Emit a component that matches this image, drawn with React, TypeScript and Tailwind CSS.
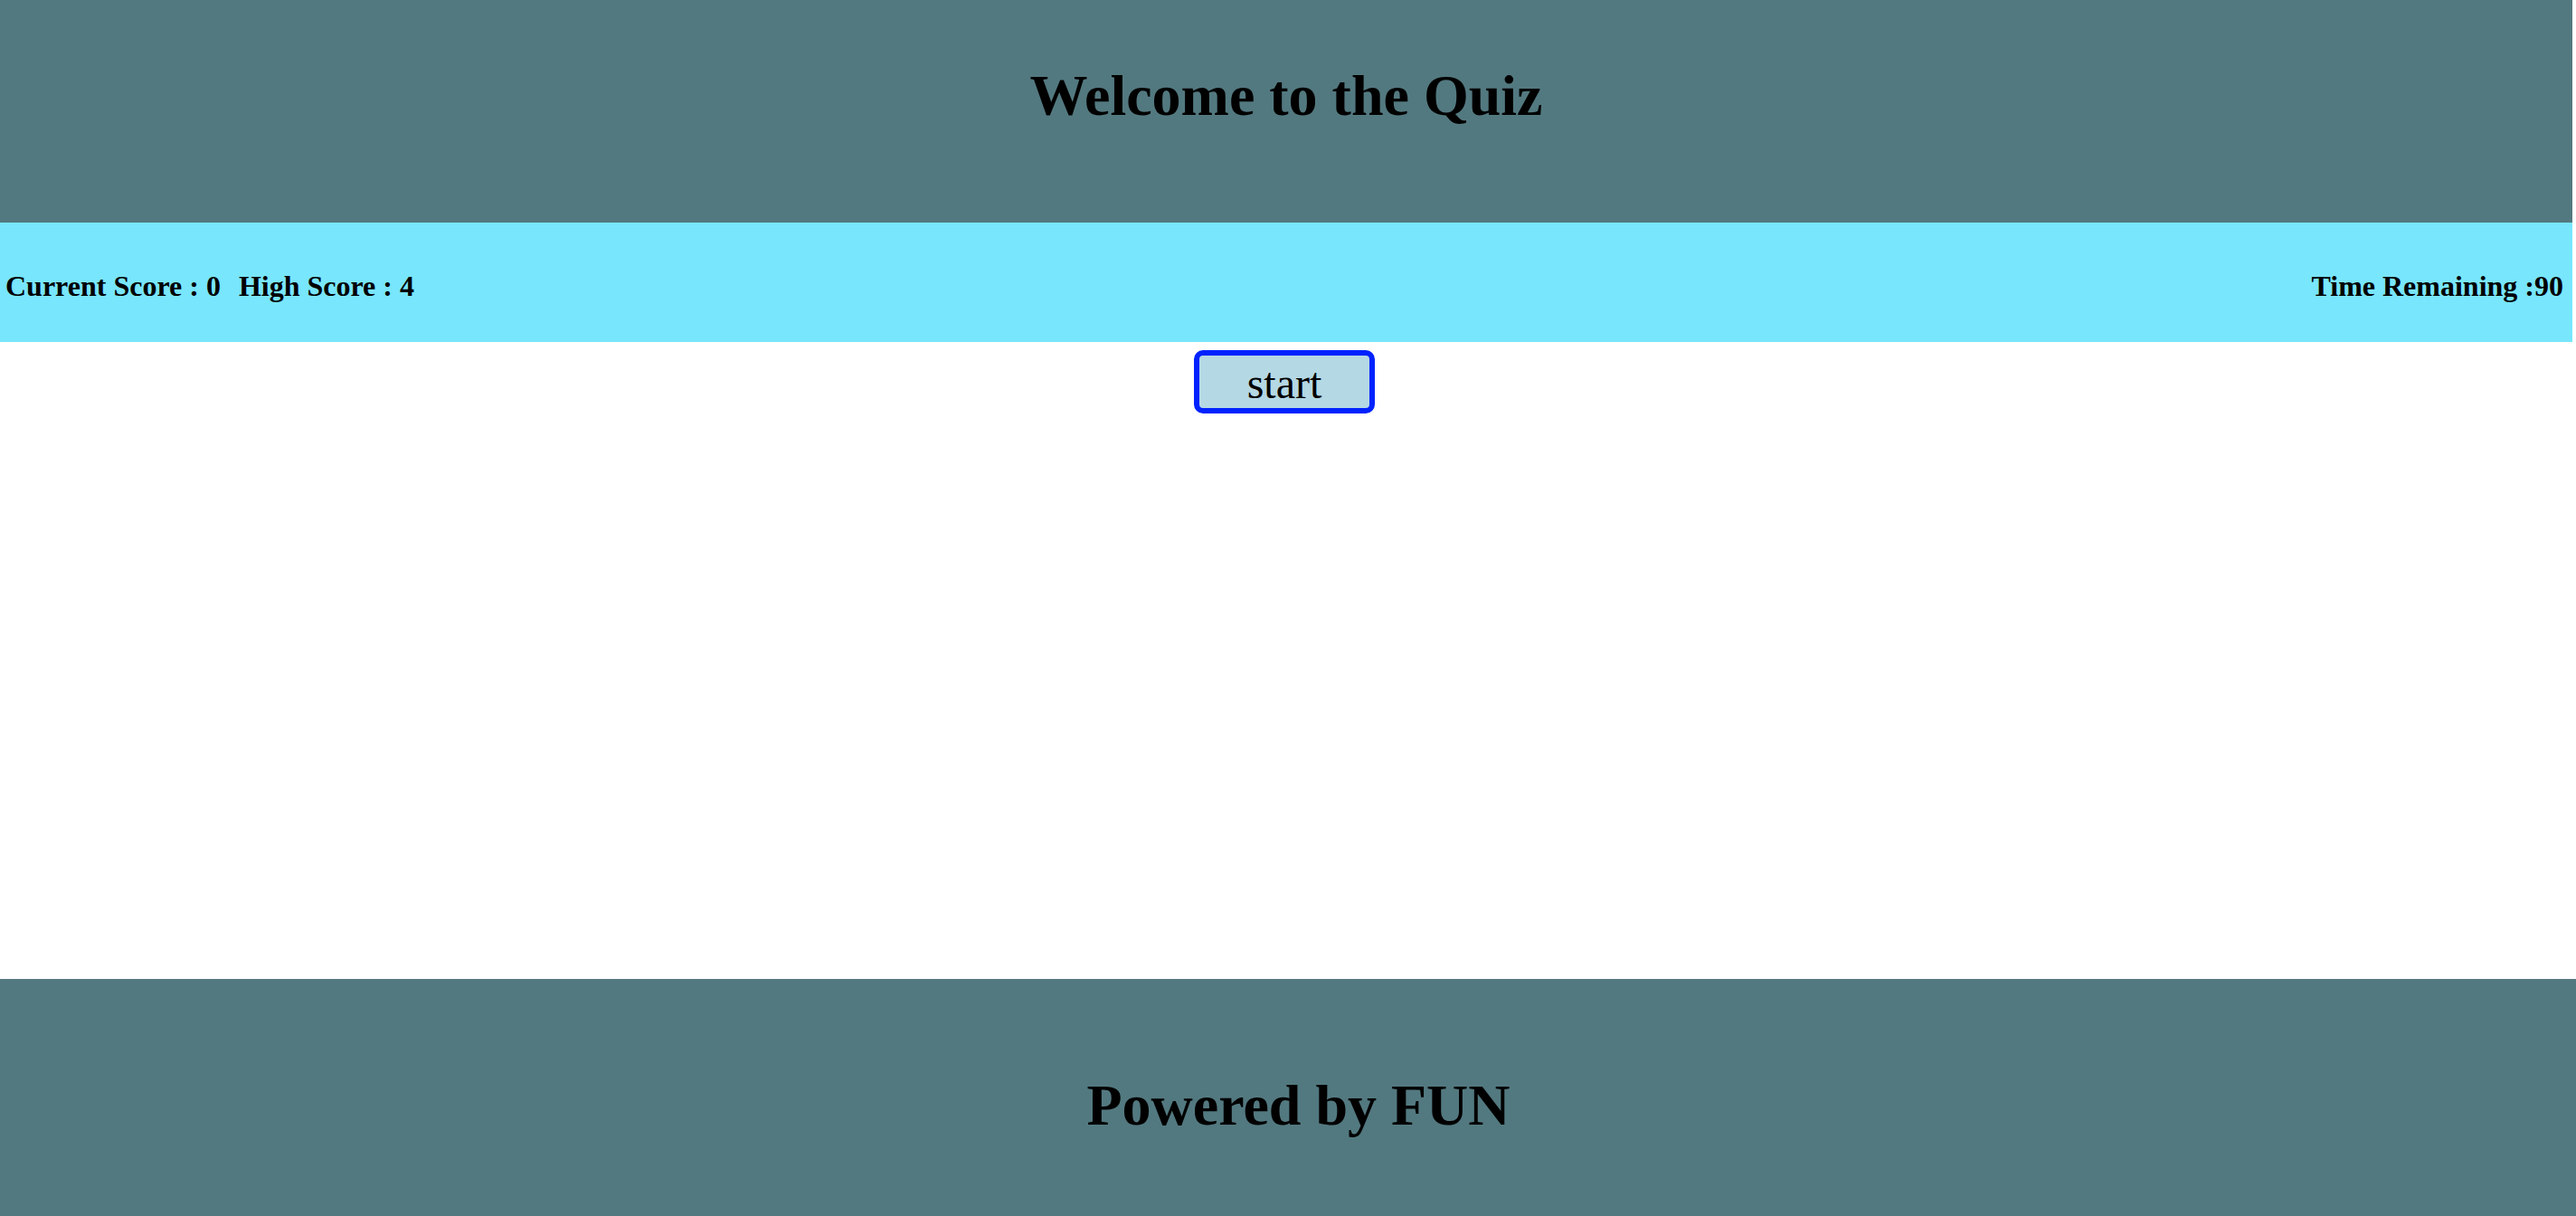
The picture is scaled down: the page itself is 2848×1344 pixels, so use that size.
import React from "react";

export default function App() {
  const serif = { fontFamily: '"Liberation Serif", "Times New Roman", serif' };
  return (
    <div className="flex h-screen w-full flex-col bg-white text-black" style={serif}>
      <header className="h-[246px] w-[2844px] shrink-0 bg-[#537980] pt-[70px]">
        <h1 className="text-center text-[64px] font-bold leading-[72px]">Welcome to the Quiz</h1>
      </header>
      <div className="flex h-[132px] w-[2844px] shrink-0 items-center justify-between bg-[#78e6fc] pl-[6px] pr-[10px] pt-[8px] text-[32px] font-bold">
        <div className="flex gap-[20px]">
          <span>Current Score : 0</span>
          <span>High Score : 4</span>
        </div>
        <span>Time Remaining :90</span>
      </div>
      <main className="flex w-[2844px] flex-1 flex-col items-center">
        <button
          className="mr-[4px] mt-[9px] flex h-[70px] w-[200px] items-center justify-center rounded-[10px] border-[6px] border-[#0022ff] bg-[#b4d8e4] pt-[4px] text-[48px] leading-none text-black"
          style={serif}
        >
          start
        </button>
      </main>
      <footer className="h-[262px] w-full shrink-0 bg-[#537980] pl-[23px] pt-[104px]">
        <h2 className="text-center text-[64px] font-bold leading-[72px]">Powered by FUN</h2>
      </footer>
    </div>
  );
}
